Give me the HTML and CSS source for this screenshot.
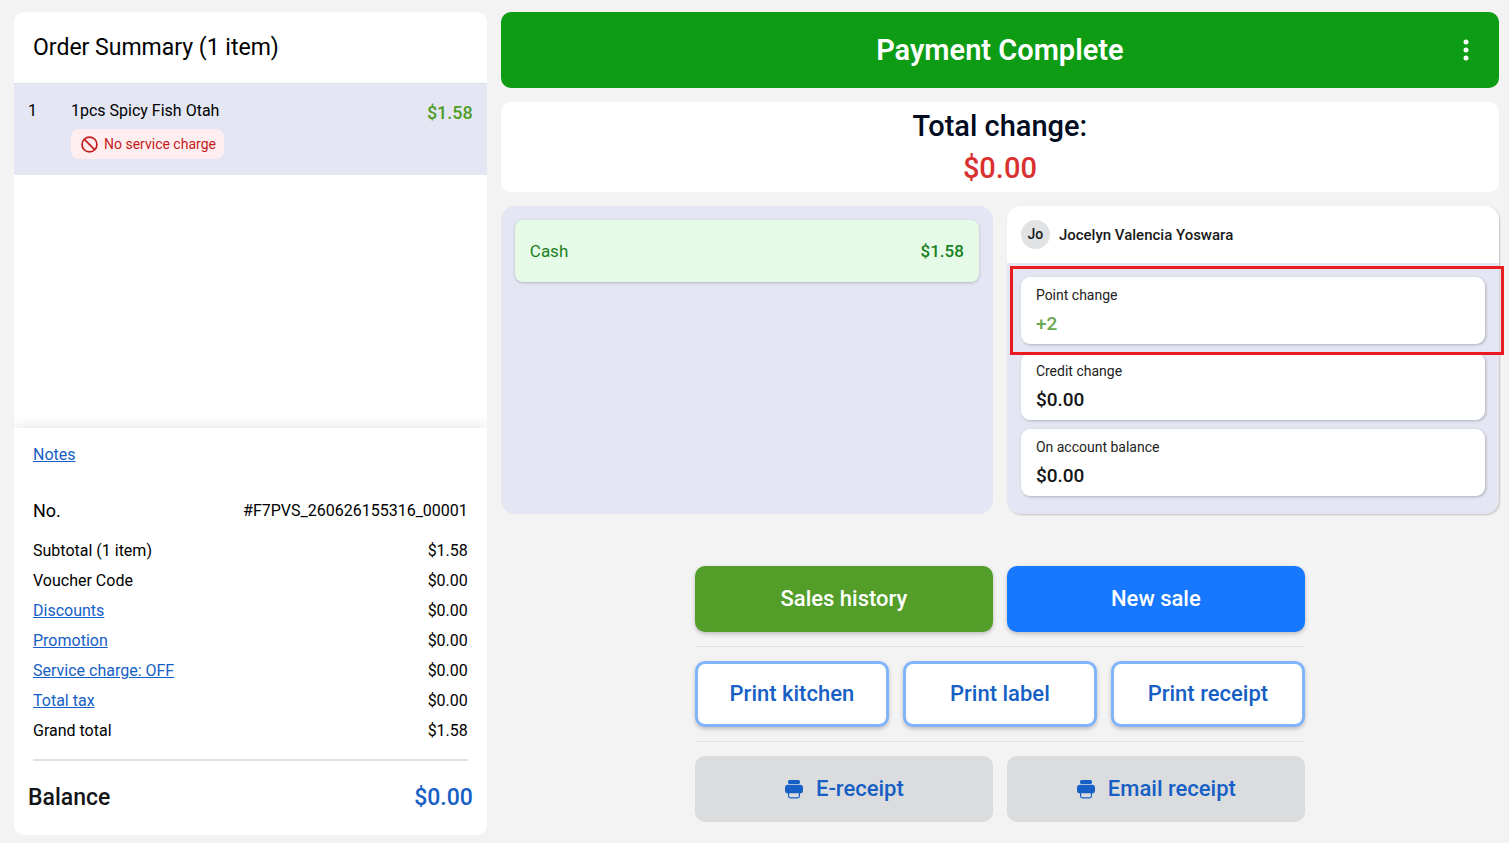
FILE: index.html
```html
<!DOCTYPE html>
<html lang="en">
<head>
<meta charset="utf-8">
<meta name="viewport" content="width=device-width, initial-scale=1">
<title>Payment Complete</title>
<link rel="stylesheet" href="styles.css">
</head>
<body>
<svg class="sprite" aria-hidden="true">
  <symbol id="icon-printer" viewBox="0 0 20 20">
    <rect x="4" y="1" width="12" height="4" rx="1.6" fill="currentColor"/>
    <path fill="currentColor" d="M4 5.800h12a3 3 0 0 1 3 3v2.700a3 3 0 0 1-3 3H4a3 3 0 0 1-3-3V8.800a3 3 0 0 1 3-3z"/>
    <path fill="#dadcde" stroke="currentColor" stroke-width="1.200" d="M4.600 13.600h10.800v3.400a1.800 1.800 0 0 1-1.800 1.800H6.400a1.800 1.800 0 0 1-1.800-1.800z"/>
  </symbol>
</svg>
<main class="page">
  <section class="order" aria-label="Order summary">
    <header class="order-head"><h2 class="order-title">Order Summary (1 item)</h2></header>
    <ul class="items">
      <li class="item">
        <span class="item-qty">1</span>
        <div class="item-body">
          <span class="item-name">1pcs Spicy Fish Otah</span>
          <span class="tag">
            <svg class="tag-icon" viewBox="0 0 16 16" aria-hidden="true"><circle cx="8" cy="8" r="7"/><path d="M3 3l10 10"/></svg>
            No service charge
          </span>
        </div>
        <span class="item-price">$1.58</span>
      </li>
    </ul>
    <footer class="order-foot">
      <a class="link notes" href="#notes">Notes</a>
      <dl class="lines">
        <div class="line line-no"><dt>No.</dt><dd>#F7PVS_260626155316_00001</dd></div>
        <div class="line"><dt>Subtotal (1 item)</dt><dd>$1.58</dd></div>
        <div class="line"><dt>Voucher Code</dt><dd>$0.00</dd></div>
        <div class="line"><dt><a class="link" href="#discounts">Discounts</a></dt><dd>$0.00</dd></div>
        <div class="line"><dt><a class="link" href="#promotion">Promotion</a></dt><dd>$0.00</dd></div>
        <div class="line"><dt><a class="link" href="#service">Service charge: OFF</a></dt><dd>$0.00</dd></div>
        <div class="line"><dt><a class="link" href="#tax">Total tax</a></dt><dd>$0.00</dd></div>
        <div class="line"><dt>Grand total</dt><dd>$1.58</dd></div>
      </dl>
      <div class="balance"><span>Balance</span><span class="balance-value">$0.00</span></div>
    </footer>
  </section>

  <section class="payment" aria-label="Payment">
    <header class="banner">
      <h1 class="banner-title">Payment Complete</h1>
      <button class="menu" type="button" aria-label="More options">
        <svg class="menu-icon" viewBox="0 0 6 22" aria-hidden="true"><circle cx="3" cy="3" r="2.500"/><circle cx="3" cy="11" r="2.500"/><circle cx="3" cy="19" r="2.500"/></svg>
      </button>
    </header>
    <div class="change">
      <span>Total change:</span>
      <span class="change-value">$0.00</span>
    </div>
    <div class="panels">
      <div class="panel tenders">
        <div class="tender"><span>Cash</span><span class="tender-value">$1.58</span></div>
      </div>
      <div class="panel customer">
        <header class="customer-head"><span class="avatar">Jo</span><span>Jocelyn Valencia Yoswara</span></header>
        <div class="stats">
          <div class="stat stat-marked"><span>Point change</span><span class="stat-value stat-gain">+2</span></div>
          <div class="stat"><span>Credit change</span><span class="stat-value">$0.00</span></div>
          <div class="stat"><span>On account balance</span><span class="stat-value">$0.00</span></div>
        </div>
      </div>
    </div>
    <div class="actions">
      <div class="action-row">
        <button class="btn btn-green" type="button">Sales history</button>
        <button class="btn btn-blue" type="button">New sale</button>
      </div>
      <div class="action-row">
        <button class="btn btn-outline" type="button">Print kitchen</button>
        <button class="btn btn-outline" type="button">Print label</button>
        <button class="btn btn-outline" type="button">Print receipt</button>
      </div>
      <div class="action-row">
        <button class="btn btn-gray" type="button"><svg class="btn-icon" aria-hidden="true"><use href="#icon-printer"/></svg>E-receipt</button>
        <button class="btn btn-gray" type="button"><svg class="btn-icon" aria-hidden="true"><use href="#icon-printer"/></svg>Email receipt</button>
      </div>
    </div>
  </section>
</main>
</body>
</html>
```
FILE: styles.css
```css
* { box-sizing: border-box; }

body {
  margin: 0;
  background: #f3f3f3;
  color: #000;
  font-family: Roboto, "Liberation Sans", sans-serif;
  font-size: 16px;
  line-height: 20px;
}

h1, h2, ul, dl, dd { margin: 0; padding: 0; }
button { font-family: inherit; cursor: pointer; }
.sprite { display: none; }

.page {
  display: grid;
  grid-template-columns: minmax(0, 9fr) minmax(0, 19fr);
  gap: 14px;
  min-height: 100vh;
  padding: 12px 10px 8px 14px;
}

/* Order summary */
.order {
  display: flex;
  flex-direction: column;
  background: #fff;
  border-radius: 10px;
  overflow: hidden;
}
.order-head {
  padding: 22px 19px 21px;
  border-bottom: 1px solid #dcdfe3;
}
.order-title { font-size: 23px; line-height: 28px; font-weight: 400; }
.items { flex: 1; list-style: none; }
.item {
  display: flex;
  gap: 20px;
  padding: 17px 14px 16px;
  background: #e4e7f3;
}
.item-qty { width: 23px; }
.item-body { flex: 1; display: flex; flex-direction: column; align-items: flex-start; gap: 8px; }
.item-price { color: #4f9e2a; font-size: 18px; line-height: 24px; font-weight: 500; }
.tag {
  display: flex;
  align-items: center;
  gap: 6px;
  padding: 5px 8px 5px 10px;
  border-radius: 8px;
  background: #ffeeef;
  color: #c41c1c;
  font-size: 14px;
}
.tag-icon { width: 17px; height: 17px; fill: none; stroke: currentColor; stroke-width: 1.6; }

.order-foot {
  padding: 17px 19px 23px;
  background: #fff;
  box-shadow: 0 -2px 12px rgba(0, 0, 0, 0.1);
}
.link { color: #1660c5; text-decoration: underline; }
.notes { display: block; margin-bottom: 31px; }
.lines { padding-bottom: 13px; border-bottom: 2px solid #dfe2e4; }
.line { display: flex; align-items: center; justify-content: space-between; height: 30px; }
.line-no { margin-bottom: 10px; }
.line-no dt { font-size: 18px; }
.balance {
  display: flex;
  justify-content: space-between;
  margin: 23px -5px 0;
  color: #131517;
  font-size: 23px;
  line-height: 28px;
  font-weight: 500;
}
.balance-value { color: #1660c5; }

/* Payment */
.banner {
  display: grid;
  grid-template-columns: 1fr auto 1fr;
  align-items: center;
  height: 76px;
  padding: 0 23px;
  border-radius: 10px;
  background: #0d9c14;
  color: #fff;
}
.banner-title { grid-column: 2; font-size: 29px; line-height: 36px; font-weight: 600; }
.menu { justify-self: end; padding: 4px 7px; border: 0; background: none; color: inherit; }
.menu-icon { display: block; width: 6px; height: 22px; fill: currentColor; }
.change {
  display: flex;
  flex-direction: column;
  align-items: center;
  margin-top: 14px;
  padding: 3px 0;
  border-radius: 10px;
  background: #fff;
  color: #020c1f;
  font-size: 29px;
  line-height: 42px;
  font-weight: 500;
}
.change-value { color: #d93030; }

.panels { display: grid; grid-template-columns: 1fr 1fr; gap: 14px; margin-top: 14px; }
.panel { border-radius: 14px; background: #e4e7f3; }
.tenders { padding: 14px; }
.tender {
  display: flex;
  justify-content: space-between;
  padding: 21px 15px;
  border-radius: 8px;
  background: #e5fbe7;
  box-shadow: 0 1px 3px rgba(0, 0, 0, 0.22);
  color: #1a7f22;
  font-size: 17px;
}
.tender-value { font-weight: 500; }
.customer { box-shadow: 1px 1px 2px rgba(0, 0, 0, 0.2); }
.customer-head {
  display: flex;
  align-items: center;
  gap: 9px;
  padding: 14px;
  border-radius: 14px 14px 0 0;
  background: #fff;
  color: #17191b;
  font-size: 15px;
  font-weight: 500;
}
.avatar {
  width: 29px;
  height: 29px;
  border-radius: 50%;
  background: #e1e2e4;
  font-size: 14px;
  line-height: 29px;
  text-align: center;
}
.stats { display: grid; gap: 9px; padding: 14px 14px 18px; }
.stat {
  display: grid;
  gap: 6px;
  padding: 8px 15px;
  border-radius: 9px;
  background: #fff;
  box-shadow: 1px 1px 3px rgba(0, 0, 0, 0.24);
  color: #222;
  font-size: 14px;
}
.stat-value { color: #131517; font-size: 19px; line-height: 25px; font-weight: 500; }
.stat-gain { color: #6aa84f; }
.stat-marked { position: relative; }
.stat-marked::after {
  content: "";
  position: absolute;
  z-index: 1;
  inset: -11px -19px -11px -11px;
  border: 3px solid #ea1a1e;
  pointer-events: none;
}

.actions { max-width: 610px; margin: 52px auto 0; }
.action-row { display: grid; grid-auto-flow: column; grid-auto-columns: 1fr; gap: 14px; }
.action-row + .action-row { margin-top: 14px; padding-top: 14px; border-top: 1px solid #e0e1e2; }
.btn {
  display: flex;
  align-items: center;
  justify-content: center;
  gap: 12px;
  height: 66px;
  padding: 0;
  border: 0;
  border-radius: 10px;
  font-size: 22px;
  line-height: 28px;
  font-weight: 500;
}
.btn-green, .btn-blue, .btn-outline { box-shadow: 0 2px 4px rgba(0, 0, 0, 0.22); }
.btn-green { background: #529e29; color: #fff; }
.btn-blue { background: #1677ff; color: #fff; }
.btn-outline { border: 3px solid #80b4fb; background: #fff; color: #1660c5; }
.btn-gray { background: #dadcde; color: #1660c5; }
.btn-icon { width: 20px; height: 20px; }
```
